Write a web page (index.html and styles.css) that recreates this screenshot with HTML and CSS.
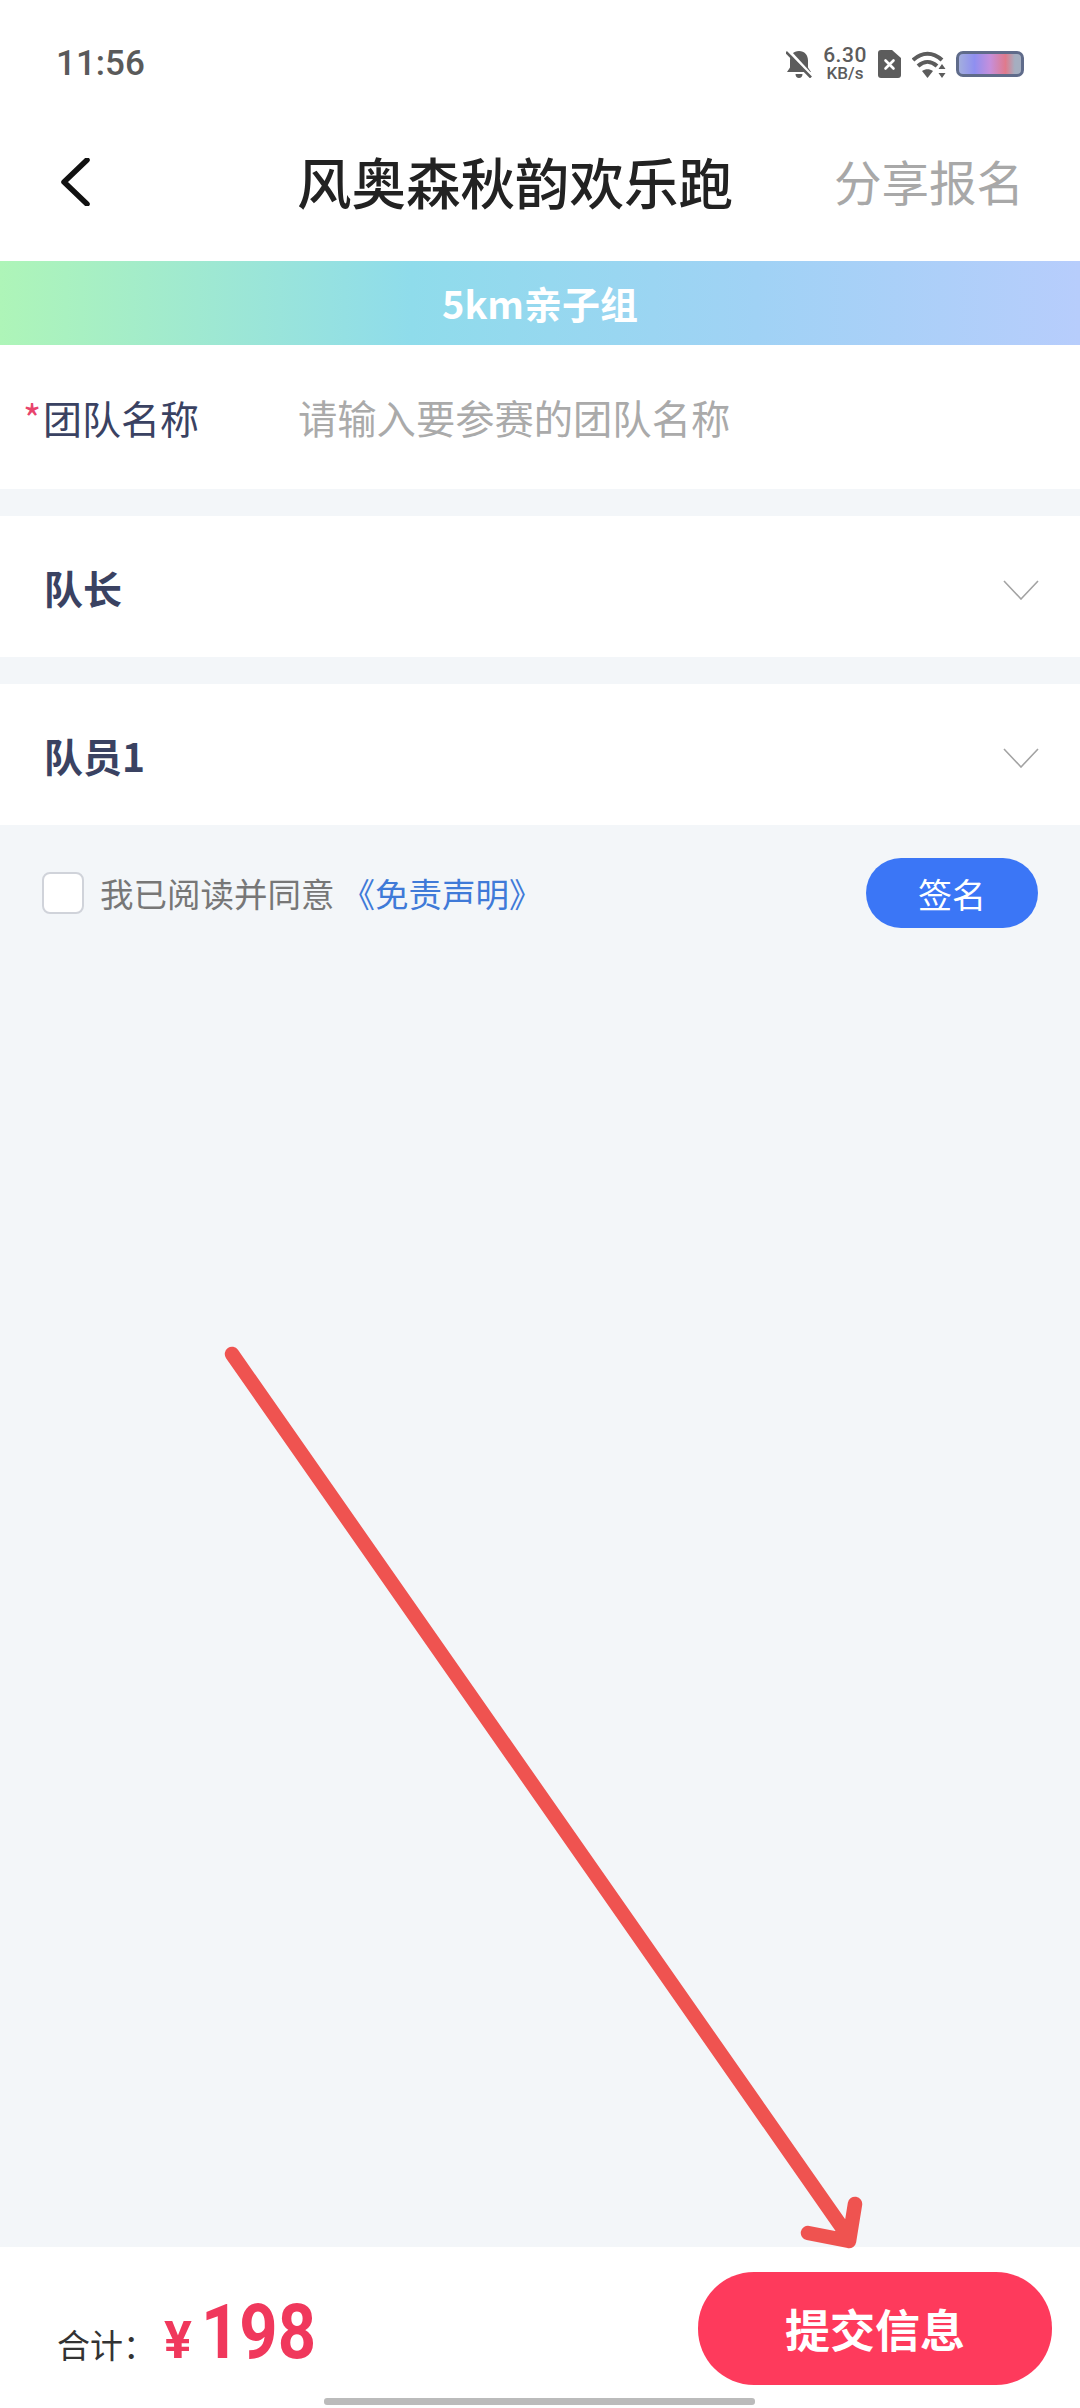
FILE: index.html
```html
<!DOCTYPE html>
<html lang="zh-CN">
<head>
    <meta charset="UTF-8">
    <title>风奥森秋韵欢乐跑</title>
    <link rel="stylesheet" href="styles.css">
</head>
<body>

<div class="page">
    <!-- Status bar -->
    <div class="status-bar">
        <span class="time">11:56</span>
        <div class="status-icons">
            <svg class="icon-bell" width="26" height="27" viewBox="0 0 26 27">
                <path d="M13 0c5.500 0 9 4 9 9.500v7l3 4.500H1l3-4.500v-7C4 4 7.500 0 13 0zM9.500 23h7c0 2.500-1.500 4-3.500 4s-3.500-1.500-3.500-4z" fill="#5c5c5c"/>
                <path d="M3 0l24 26" stroke="#fff" stroke-width="3"/>
                <path d="M0 1l25 25.500" stroke="#5c5c5c" stroke-width="2.600"/>
            </svg>
            <div class="speed">
                <span class="speed-num">6.30</span>
                <span class="speed-unit">KB/s</span>
            </div>
            <svg class="icon-sim" width="23" height="28" viewBox="0 0 23 28">
                <path d="M3 0h11l9 8v17c0 2-1 3-3 3H3c-2 0-3-1-3-3V3c0-2 1-3 3-3z" fill="#5c5c5c"/>
                <path d="M7.500 10.500l8 8M15.500 10.500l-8 8" stroke="#fff" stroke-width="2.600" stroke-linecap="round"/>
            </svg>
            <svg class="icon-wifi" width="34" height="27" viewBox="0 0 34 27">
                <path d="M1 9C10 .5 21 .5 30 9" fill="none" stroke="#5c5c5c" stroke-width="4"/>
                <path d="M6 15c6-5.500 13-5.500 19 0" fill="none" stroke="#5c5c5c" stroke-width="4"/>
                <path d="M10 20c3.500-2.500 7.500-2.500 11 0l-5.500 7z" fill="#5c5c5c"/>
                <path d="M30 13l3.500 5h-7zM30 27l-3.500-5h7z" fill="#5c5c5c"/>
            </svg>
            <div class="battery"></div>
        </div>
    </div>

    <!-- Header -->
    <div class="header">
        <svg class="back" width="30" height="48" viewBox="0 0 30 48">
            <path d="M27 2L4 24l23 22" fill="none" stroke="#111" stroke-width="5.500" stroke-linecap="round" stroke-linejoin="round"/>
        </svg>
        <h1 class="title">风奥森秋韵欢乐跑</h1>
        <a class="share">分享报名</a>
    </div>

    <div class="group-banner">5km亲子组</div>

    <!-- Team name -->
    <div class="team-row">
        <span class="required">*</span>
        <span class="team-label">团队名称</span>
        <span class="placeholder">请输入要参赛的团队名称</span>
    </div>

    <!-- Members -->
    <div class="member-row">
        <span class="member-name">队长</span>
        <svg class="chevron" width="36" height="20" viewBox="0 0 36 20">
            <path d="M1 1l17 18L35 1" fill="none" stroke="#a3a3a3" stroke-width="1.600"/>
        </svg>
    </div>
    <div class="member-row">
        <span class="member-name">队员1</span>
        <svg class="chevron" width="36" height="20" viewBox="0 0 36 20">
            <path d="M1 1l17 18L35 1" fill="none" stroke="#a3a3a3" stroke-width="1.600"/>
        </svg>
    </div>

    <!-- Agreement -->
    <div class="agree-row">
        <span class="checkbox"></span>
        <span class="agree-text">我已阅读并同意</span>
        <a class="agree-link">《免责声明》</a>
        <button class="sign-btn">签名</button>
    </div>

    <div class="spacer"></div>

    <!-- Footer -->
    <div class="footer">
        <div class="total">
            <span class="total-label">合计：</span>
            <span class="yen">¥</span>
            <span class="amount">198</span>
        </div>
        <button class="submit-btn">提交信息</button>
    </div>

    <div class="home-bar"></div>

    <!-- Red annotation arrow -->
    <svg class="arrow" width="1080" height="2408" viewBox="0 0 1080 2408">
        <path d="M232 1354L848 2236M855 2204L849 2241L808 2233" fill="none" stroke="#ef5350" stroke-width="14.500" stroke-linecap="round" stroke-linejoin="round"/>
    </svg>
</div>

</body>
</html>
```

FILE: styles.css
```css
* { box-sizing: border-box; }
body { margin: 0; font-family: "Noto Sans CJK SC", "Noto Sans", sans-serif; background: #f3f6f9; }
.page { position: relative; width: 1080px; height: 2408px; display: flex; flex-direction: column; overflow: hidden; background: #f3f6f9; }

.status-bar { height: 103px; padding: 25px 56px 0 56px; background: #fff; display: flex; align-items: center; justify-content: space-between; }
.time { font-family: Roboto, sans-serif; font-size: 35px; font-weight: 500; color: #5a5a5a; line-height: 40px; }
.status-icons { display: flex; align-items: center; }
.icon-bell { margin-right: 11px; }
.speed { width: 44px; display: flex; flex-direction: column; align-items: center; margin-right: 11px; color: #5c5c5c; font-family: Roboto, sans-serif; font-weight: 500; }
.speed-num { font-size: 21px; line-height: 18px; letter-spacing: 0.5px; }
.speed-unit { font-size: 17px; line-height: 18px; }
.icon-sim { margin-right: 11px; }
.icon-wifi { margin-right: 10px; }
.battery { width: 68px; height: 26px; border: 3px solid #5f6b8a; border-radius: 7px; background: linear-gradient(90deg, #a3aede 0%, #8f8ff0 25%, #c58fdc 50%, #e07a8c 75%, #a5aec0 90%); }

.header { height: 158px; background: #fff; display: flex; align-items: center; padding: 0 56px 0 60px; position: relative; }
.back { flex: none; }
.title { margin: 0 0 2px 207px; font-size: 54.500px; font-weight: 500; color: #222; line-height: 64px; white-space: nowrap; }
.share { margin: 0 0 3px auto; font-size: 47.500px; color: #a8a8a8; line-height: 60px; white-space: nowrap; }

.group-banner { height: 84px; background: linear-gradient(90deg, #aef5b8 0%, #8fdceb 38%, #a0d2f5 70%, #b7cdfc 100%); color: #fff; font-size: 38px; font-weight: 700; text-align: center; line-height: 84px; }

.team-row { height: 144px; background: #fff; display: flex; align-items: center; padding: 0 0 0 23px; margin-bottom: 27px; font-size: 39px; line-height: 50px; }
.required { width: 20px; color: #e8446c; }
.team-label { width: 255px; color: #3a4262; }
.placeholder { font-size: 39.300px; color: #aaa; }

.member-row { height: 141px; background: #fff; display: flex; align-items: center; justify-content: space-between; padding: 0 41px 0 44px; margin-bottom: 27px; }
.chevron { flex: none; margin-top: 6px; }
.member-name { font-size: 39px; font-weight: 700; color: #3a4262; line-height: 50px; }

.agree-row { height: 70px; margin-top: 6px; display: flex; align-items: center; padding: 0 42px 0 42px; }
.checkbox { width: 42px; height: 42px; background: #fff; border: 2px solid #d0d3da; border-radius: 8px; margin-right: 16px; }
.agree-text { font-size: 33.500px; color: #777; line-height: 44px; }
.agree-link { font-size: 33.500px; color: #3f7ad8; line-height: 44px; margin-left: 7px; }
.sign-btn { margin-left: auto; width: 172px; height: 70px; border: none; border-radius: 35px; background: #3b76f6; color: #fff; font-family: inherit; font-size: 34px; padding: 0; }

.spacer { flex: 1; }

.footer { height: 161px; background: #fff; display: flex; align-items: center; padding: 25px 28px 23px 57px; }
.total { display: flex; align-items: baseline; margin-top: 7px; }
.total-label { font-size: 33px; color: #333; line-height: 44px; width: 107px; }
.yen { font-family: Roboto, sans-serif; font-size: 52px; font-weight: 700; color: #f0385c; line-height: 50px; }
.amount { font-family: Roboto, sans-serif; font-size: 76px; font-weight: 700; color: #f0385c; line-height: 80px; margin-left: 9px; transform: scaleX(0.88); transform-origin: left center; }
.submit-btn { margin-left: auto; width: 354px; height: 113px; border: none; border-radius: 56px; background: #fe3a5c; color: #fff; font-family: inherit; font-size: 45px; font-weight: 700; padding: 0; }

.home-bar { position: absolute; left: 324px; bottom: 3px; width: 431px; height: 7px; border-radius: 3px; background: #bbb; }
.arrow { position: absolute; left: 0; top: 0; pointer-events: none; }
```
